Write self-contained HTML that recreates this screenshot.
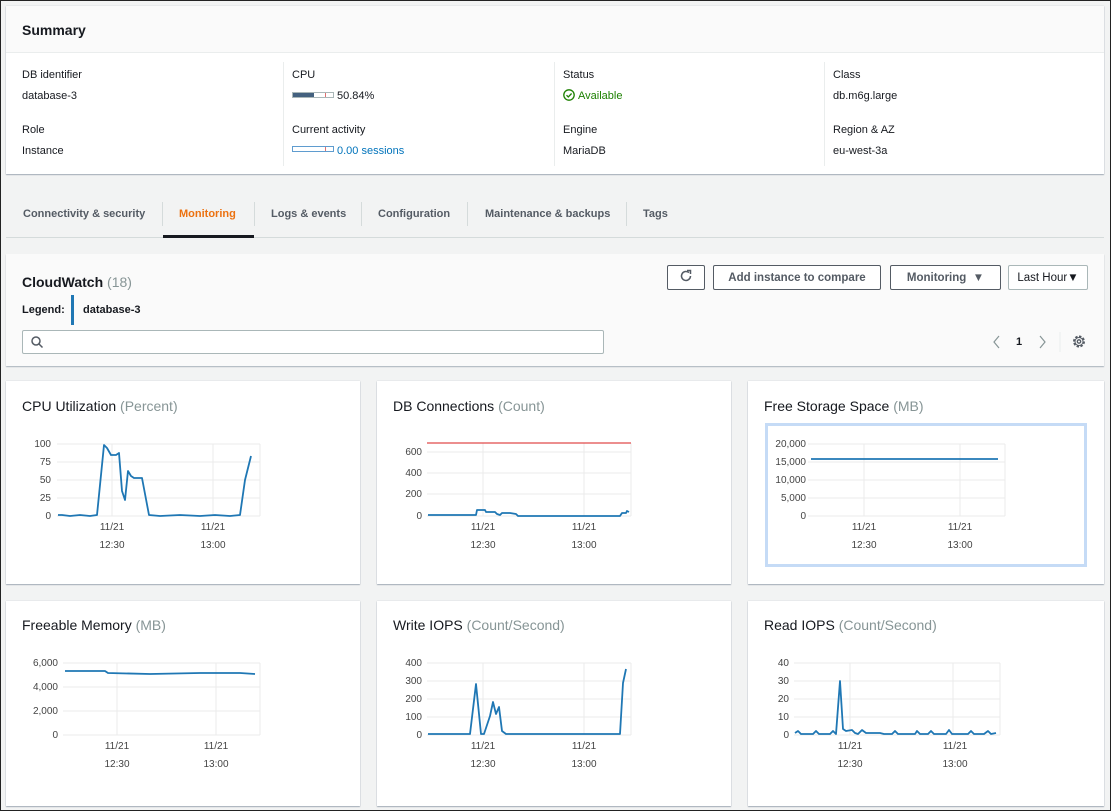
<!DOCTYPE html>
<html><head><meta charset="utf-8"><style>
*{box-sizing:border-box;margin:0;padding:0}
body{width:1111px;height:811px;overflow:hidden;background:#f2f3f3;font-family:"Liberation Sans",sans-serif;color:#16191f;position:relative}
.frame{position:absolute;left:0;top:0;width:1111px;height:811px;border:1px solid #222;pointer-events:none;z-index:9}
.abs{position:absolute;white-space:nowrap}
.card{position:absolute;background:#fff;box-shadow:0 1px 1px rgba(0,31,63,.3),0 0 1px rgba(0,31,63,.2)}
.lbl{font-size:11px;color:#16191f}
.val{font-size:11px;color:#16191f}
.tab{position:absolute;top:208px;font-size:11px;font-weight:bold;color:#545b64}
.sep{position:absolute;top:202px;width:1px;height:24px;background:#d5dbdb}
.btn{position:absolute;top:265px;height:25px;border:1px solid #545b64;border-radius:2px;background:#fff;font-size:11.5px;font-weight:bold;color:#545b64;text-align:center;line-height:25px}
.ct{position:absolute;font-size:14px;color:#16191f}
.ct span{color:#879596}
svg text{font-family:"Liberation Sans",sans-serif;font-size:10px;fill:#444}
</style></head><body>
<div class="frame"></div>

<div class="card" style="left:6px;top:6px;width:1098px;height:168px"></div>
<div class="abs" style="left:6px;top:6px;width:1098px;height:47px;background:#fafafa;border-bottom:1px solid #eaeded"></div>
<div class="abs" style="left:22px;top:22px;font-size:14px;font-weight:bold">Summary</div>
<div class="abs" style="left:283px;top:62px;width:1px;height:104px;background:#eaeded"></div>
<div class="abs" style="left:554px;top:62px;width:1px;height:104px;background:#eaeded"></div>
<div class="abs" style="left:824px;top:62px;width:1px;height:104px;background:#eaeded"></div>

<div class="abs lbl" style="left:22px;top:69px">DB identifier</div>
<div class="abs val" style="left:22px;top:90px">database-3</div>
<div class="abs lbl" style="left:22px;top:124px">Role</div>
<div class="abs val" style="left:22px;top:145px">Instance</div>

<div class="abs lbl" style="left:292px;top:69px">CPU</div>
<div class="abs" style="left:292px;top:92px;width:42px;height:6px;border:1px solid #aab7b8;background:#fff"><div style="width:21px;height:4px;background:#44617f"></div><div style="position:absolute;left:32px;top:0;width:1px;height:4px;background:#e07070"></div></div>
<div class="abs val" style="left:337px;top:90px">50.84%</div>
<div class="abs lbl" style="left:292px;top:124px">Current activity</div>
<div class="abs" style="left:292px;top:146px;width:42px;height:6px;border:1px solid #5f9ccf;background:#fff"><div style="position:absolute;left:32px;top:0;width:1px;height:4px;background:#e07070"></div></div>
<div class="abs val" style="left:337px;top:145px;color:#0073bb">0.00 sessions</div>

<div class="abs lbl" style="left:563px;top:69px">Status</div>
<div class="abs val" style="left:563px;top:89px;color:#1d8102"><svg width="12" height="12" viewBox="0 0 12 12" style="vertical-align:-2px;margin-right:3px"><circle cx="6" cy="6" r="5.2" fill="none" stroke="#1d8102" stroke-width="1.3"/><path d="M3.5 6.2l1.8 1.8 3.3-3.5" fill="none" stroke="#1d8102" stroke-width="1.3"/></svg>Available</div>
<div class="abs lbl" style="left:563px;top:124px">Engine</div>
<div class="abs val" style="left:563px;top:145px">MariaDB</div>

<div class="abs lbl" style="left:833px;top:69px">Class</div>
<div class="abs val" style="left:833px;top:90px">db.m6g.large</div>
<div class="abs lbl" style="left:833px;top:124px">Region &amp; AZ</div>
<div class="abs val" style="left:833px;top:145px">eu-west-3a</div>

<div class="abs" style="left:6px;top:237px;width:1098px;height:1px;background:#d5dbdb"></div>
<div class="tab" style="left:23px">Connectivity &amp; security</div>
<div class="sep" style="left:162px"></div>
<div class="tab" style="left:179px;color:#ec7211">Monitoring</div>
<div class="abs" style="left:163px;top:235px;width:91px;height:3px;background:#16191f"></div>
<div class="sep" style="left:254px"></div>
<div class="tab" style="left:271px">Logs &amp; events</div>
<div class="sep" style="left:361px"></div>
<div class="tab" style="left:378px">Configuration</div>
<div class="sep" style="left:467px"></div>
<div class="tab" style="left:485px">Maintenance &amp; backups</div>
<div class="sep" style="left:626px"></div>
<div class="tab" style="left:643px">Tags</div>

<div class="abs" style="left:6px;top:254px;width:1098px;height:112px;background:#fafafa;box-shadow:0 1px 1px rgba(0,31,63,.3)"></div>
<div class="abs" style="left:22px;top:274px;font-size:14px;font-weight:bold">CloudWatch <span style="font-weight:normal;color:#879596">(18)</span></div>
<div class="abs" style="left:22px;top:304px;font-size:11px;font-weight:bold">Legend:</div>
<div class="abs" style="left:71px;top:295px;width:3px;height:30px;background:#1f77b4"></div>
<div class="abs" style="left:83px;top:304px;font-size:11px;font-weight:bold">database-3</div>
<div class="abs" style="left:22px;top:330px;width:582px;height:24px;border:1px solid #aab7b8;border-radius:2px;background:#fff"><svg width="14" height="14" viewBox="0 0 14 14" style="position:absolute;left:7px;top:4px"><circle cx="6" cy="6" r="4" fill="none" stroke="#545b64" stroke-width="1.5"/><path d="M9 9l3.5 3.5" stroke="#545b64" stroke-width="1.5"/></svg></div>

<div class="btn" style="left:667px;width:38px"><svg width="14" height="14" viewBox="0 0 14 14" style="vertical-align:-2px"><path d="M11.5 7A4.5 4.5 0 1 1 10 3.6" fill="none" stroke="#545b64" stroke-width="1.5"/><path d="M8 1.5h3.5V5" fill="none" stroke="#545b64" stroke-width="1.5"/></svg></div>
<div class="btn" style="left:713px;width:168px">Add instance to compare</div>
<div class="btn" style="left:890px;width:111px">Monitoring &nbsp;▼</div>
<div class="btn" style="left:1008px;width:80px;border-color:#aab7b8;font-weight:normal;color:#16191f">Last Hour▼</div>

<svg class="abs" style="left:985px;top:332px" width="110" height="20" viewBox="0 0 110 20">
<path d="M14 4l-5 6 5 6" fill="none" stroke="#879596" stroke-width="1.2"/>
<text x="31" y="13" style="font-size:11px;font-weight:bold;fill:#16191f">1</text>
<path d="M55 4l5 6-5 6" fill="none" stroke="#879596" stroke-width="1.2"/>
<line x1="75" y1="0" x2="75" y2="20" stroke="#eaeded"/>
<circle cx="94" cy="9.5" r="5" fill="none" stroke="#545b64" stroke-width="2" stroke-dasharray="2.4 1.5"/>
<circle cx="94" cy="9.5" r="4" fill="none" stroke="#545b64" stroke-width="1"/>
<circle cx="94" cy="9.5" r="1.7" fill="none" stroke="#545b64" stroke-width="1.3"/>
</svg>

<div class="card" style="left:6px;top:381px;width:354px;height:203px"></div>
<div class="card" style="left:377px;top:381px;width:354px;height:203px"></div>
<div class="card" style="left:748px;top:381px;width:356px;height:203px"></div>
<div class="card" style="left:6px;top:601px;width:354px;height:205px"></div>
<div class="card" style="left:377px;top:601px;width:354px;height:205px"></div>
<div class="card" style="left:748px;top:601px;width:356px;height:205px"></div>
<div class="abs" style="left:765px;top:423px;width:322px;height:144px;border:3px solid #c5dbf6"></div>

<div class="ct" style="left:22px;top:398px">CPU Utilization <span>(Percent)</span></div>
<div class="ct" style="left:393px;top:398px">DB Connections <span>(Count)</span></div>
<div class="ct" style="left:764px;top:398px">Free Storage Space <span>(MB)</span></div>
<div class="ct" style="left:22px;top:617px">Freeable Memory <span>(MB)</span></div>
<div class="ct" style="left:393px;top:617px">Write IOPS <span>(Count/Second)</span></div>
<div class="ct" style="left:764px;top:617px">Read IOPS <span>(Count/Second)</span></div>

<svg class="abs" style="left:0;top:0" width="1111" height="811" viewBox="0 0 1111 811">
<g stroke="#ebebeb" stroke-width="1" fill="none">
<path d="M57 444H260M57 462H260M57 480H260M57 498H260M57 516H260M112 444V516M213 444V516M260 444V516"/>
<path d="M427 452H631M427 473H631M427 494H631M427 516H631M483 443V516M584 443V516M631 443V516"/>
<path d="M808 444H1005M808 462H1005M808 480H1005M808 498H1005M808 516H1005M864 444V516M960 444V516M1005 444V516"/>
<path d="M63 663H260M63 687H260M63 711H260M63 735H260M117 663V735M216 663V735M260 663V735"/>
<path d="M427 663H631M427 681H631M427 699H631M427 717H631M427 735H631M483 663V735M584 663V735M631 663V735"/>
<path d="M794 663H1000M794 681H1000M794 699H1000M794 717H1000M794 735H1000M850 663V735M953 663V735M1000 663V735"/>
</g>
<g fill="none" stroke="#1f77b4" stroke-width="1.8" stroke-linejoin="round">
<polyline points="58,515 62,515 70,516 80,515 90,516 97,515 104,445 107,448 111,455 116,455 119,453 122,491 125,500 128,471 131,476 134,478 142,478 149,515 160,516 180,515 200,516 215,515 230,516 240,515 245,480 251,456"/>
<polyline points="428,515 476,515 477,510 485,510 486,512 495,512 497,514 500,515 502,513 510,513 516,514 518,516 620,516 622,513 626,513 627,511 629,512"/>
<polyline points="811,459 998,459"/>
<polyline points="65,671 105,671 108,673 150,674 200,673 240,673 255,674"/>
<polyline points="428,734 470,734 476,684 481,734 484,734 490,716 493,702 496,714 499,707 502,731 506,734 620,734 623,683 626,669"/>
<polyline points="795,733 798,731 801,734 813,734 816,731 819,734 830,734 833,731 836,734 840,681 843,729 846,731 852,730 855,733 858,734 862,730 866,733 870,733 880,733 884,734 892,734 895,731 898,734 915,734 917,731 920,734 928,734 931,731 934,734 946,734 949,730 952,734 968,734 971,731 974,734 984,734 988,731 991,734 996,733"/>
</g>
<line x1="427" y1="443" x2="631" y2="443" stroke="#e04a4a" stroke-width="1.2"/>
<g text-anchor="end">
<text x="51" y="447">100</text><text x="51" y="465">75</text><text x="51" y="483">50</text><text x="51" y="501">25</text><text x="51" y="519">0</text>
<text x="422" y="455">600</text><text x="422" y="476">400</text><text x="422" y="497">200</text><text x="422" y="519">0</text>
<text x="806" y="447">20,000</text><text x="806" y="465">15,000</text><text x="806" y="483">10,000</text><text x="806" y="501">5,000</text><text x="806" y="519">0</text>
<text x="58" y="666">6,000</text><text x="58" y="690">4,000</text><text x="58" y="714">2,000</text><text x="58" y="738">0</text>
<text x="422" y="666">400</text><text x="422" y="684">300</text><text x="422" y="702">200</text><text x="422" y="720">100</text><text x="422" y="738">0</text>
<text x="789" y="666">40</text><text x="789" y="684">30</text><text x="789" y="702">20</text><text x="789" y="720">10</text><text x="789" y="738">0</text>
</g>
<g text-anchor="middle">
<text x="112" y="530">11/21</text><text x="112" y="548">12:30</text><text x="213" y="530">11/21</text><text x="213" y="548">13:00</text>
<text x="483" y="530">11/21</text><text x="483" y="548">12:30</text><text x="584" y="530">11/21</text><text x="584" y="548">13:00</text>
<text x="864" y="530">11/21</text><text x="864" y="548">12:30</text><text x="960" y="530">11/21</text><text x="960" y="548">13:00</text>
<text x="117" y="749">11/21</text><text x="117" y="767">12:30</text><text x="216" y="749">11/21</text><text x="216" y="767">13:00</text>
<text x="483" y="749">11/21</text><text x="483" y="767">12:30</text><text x="584" y="749">11/21</text><text x="584" y="767">13:00</text>
<text x="850" y="749">11/21</text><text x="850" y="767">12:30</text><text x="955" y="749">11/21</text><text x="955" y="767">13:00</text>
</g>
</svg>
</body></html>
